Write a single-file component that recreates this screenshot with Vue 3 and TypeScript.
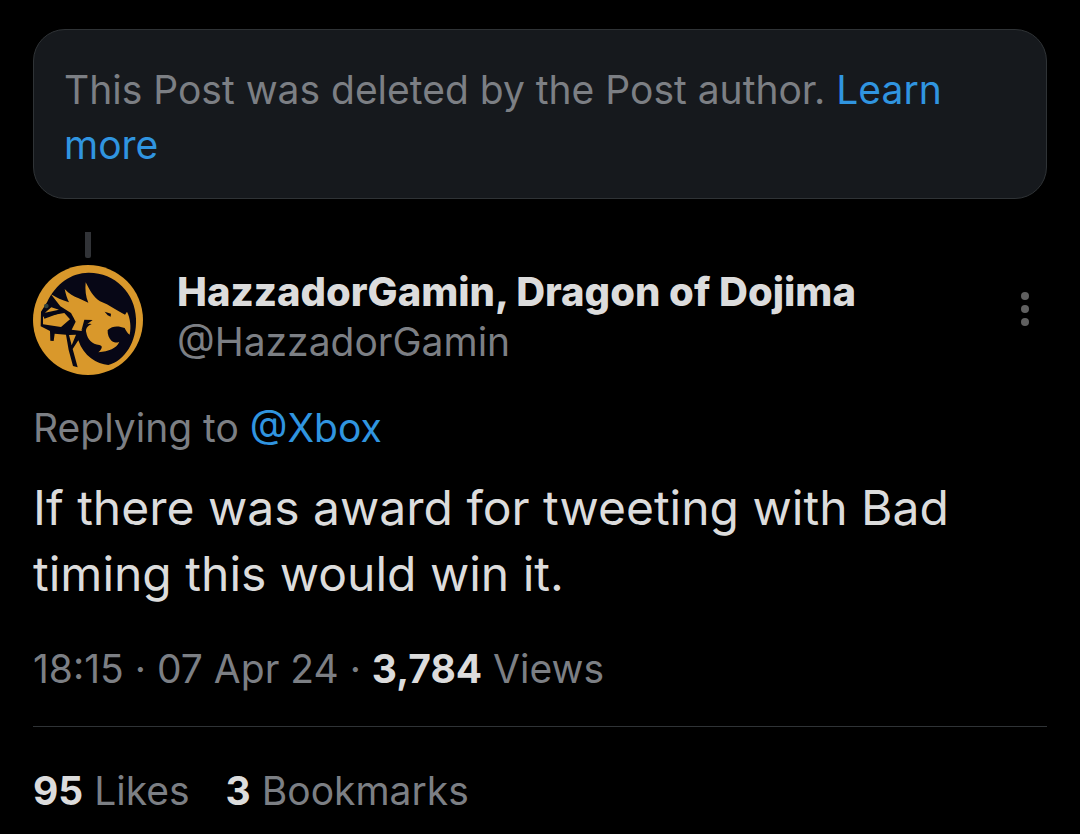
<script setup lang="ts">
interface Stat {
  value: string
  label: string
}

const stats: Stat[] = [
  { value: '95', label: 'Likes' },
  { value: '3', label: 'Bookmarks' },
]
</script>

<template>
  <main class="thread">
    <section class="notice">
      <p>This Post was deleted by the Post author. <a href="#learn-more">Learn more</a></p>
    </section>

    <article class="post">
      <div class="connector"></div>
      <header class="author">
        <svg class="avatar" viewBox="24 120 330 330" role="img" aria-label="HazzadorGamin avatar">
          <circle cx="189" cy="285" r="165" fill="#d9982b" />
          <path
            fill="#070716"
            d="M66 232 C92 175 142 142 192 143 C270 143 331 204 333 281 C336 350 299 407 250 420 C216 418 176 394 160 346 L143 372 L158 427 L144 423 L131 375 L123 329 L89 326 L86 348 L76 347 L75 318 L47 304 L48 260 Z"
          />
          <path
            fill="#d9982b"
            d="M78 208 C94 217 110 226 132 232 C126 220 122 206 119 192 C132 206 146 214 161 220 L190 233 C182 215 180 194 182 172 C194 195 204 216 225 229 C254 240 277 258 300 269 L306 260 C316 280 319 306 314 329 C307 325 303 317 299 309 C282 303 263 301 248 315 C247 329 252 340 260 348 C270 354 280 353 283 350 C274 371 252 378 220 382 C231 373 235 362 223 360 C201 358 187 342 184 323 C180 312 188 302 200 298 C182 292 174 306 170 318 L140 314 L152 290 L138 264 L106 244 Z"
          />
          <path fill="#d9982b" d="M60 263 L79 247 L102 254 Z M54 275 L118 264 L135 283 L108 306 L54 298 Z M132 330 L153 329 L140 361 Z" />
          <path fill="none" stroke="#070716" stroke-width="7" d="M57 278 L106 260 M112 311 L136 298 L143 278" />
          <path fill="#070716" d="M239 260 L258 266 L257 275 L248 271 Z M178 284 L203 285 L192 293 L179 304 L169 317 Z" />
          <circle cx="64" cy="243" r="7" fill="#31403c" />
        </svg>
        <div class="identity">
          <strong>HazzadorGamin, Dragon of Dojima</strong>
          <span>@HazzadorGamin</span>
        </div>
        <button class="more" type="button" aria-label="More options">
          <svg viewBox="0 0 8 34" aria-hidden="true">
            <circle cx="4" cy="4" r="4" />
            <circle cx="4" cy="17" r="4" />
            <circle cx="4" cy="30" r="4" />
          </svg>
        </button>
      </header>

      <p class="reply">Replying to <a href="#xbox">@Xbox</a></p>
      <p class="body">If there was award for tweeting with Bad timing this would win it.</p>
      <p class="meta"><time datetime="2024-04-07T18:15">18:15 · 07 Apr 24</time> · <b>3,784</b> Views</p>
      <footer class="stats">
        <span v-for="stat in stats" :key="stat.label"><b>{{ stat.value }}</b> {{ stat.label }}</span>
      </footer>
    </article>
  </main>
</template>

<style>
body {
  background: #000;
}
</style>

<style scoped>
.thread {
  padding: 29px 33px 0;
  color: #7c7f84;
  font-family: Inter, "Liberation Sans", sans-serif;
  font-size: 39px;
  line-height: 50px;
}

p {
  margin: 0;
}

a {
  color: #3095e0;
  text-decoration: none;
}

b,
strong {
  color: #dcdcdc;
  font-weight: 700;
}

strong {
  font-size: 40px;
  font-weight: 800;
}

.notice {
  padding: 32px 30px 26px;
  border: 1px solid #2f3336;
  border-radius: 32px;
  background: #16191d;
  line-height: 55px;
}

.connector {
  width: 6px;
  height: 26px;
  margin: 33px 52px 7px;
  border-radius: 0 0 2px 2px;
  background: #313337;
}

.author {
  display: flex;
  align-items: flex-start;
}

.avatar {
  flex: none;
  width: 110px;
  height: 110px;
}

.identity {
  display: flex;
  flex: 1;
  flex-direction: column;
  margin: 2px 0 0 34px;
}

.more {
  margin: 27px 18px 0 0;
  padding: 0;
  border: 0;
  background: none;
  cursor: pointer;
}

.more svg {
  display: block;
  width: 8px;
  height: 34px;
  fill: #606060;
}

.reply {
  margin-top: 28px;
}

.body {
  margin-top: 22px;
  color: #dcdcdc;
  font-size: 48px;
  line-height: 66px;
}

.meta {
  margin-top: 37px;
  padding-bottom: 32px;
  border-bottom: 1px solid #2f3336;
}

.stats {
  display: flex;
  gap: 36px;
  padding-top: 39px;
}
</style>
